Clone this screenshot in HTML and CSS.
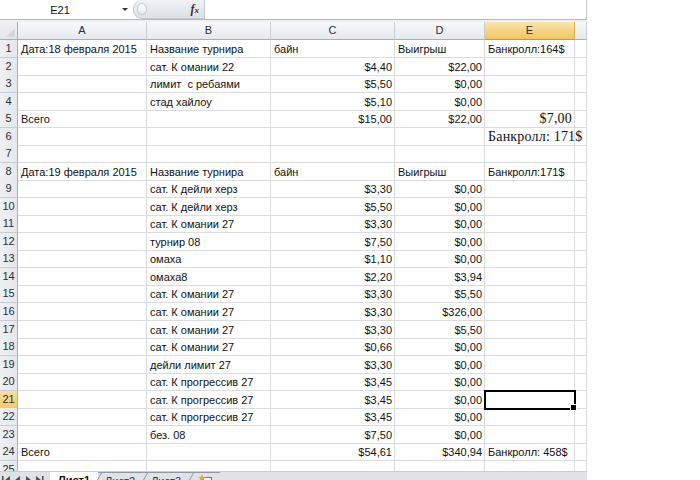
FILE: index.html
```html
<!DOCTYPE html>
<html lang="ru">
<head>
<meta charset="utf-8">
<title>Лист1</title>
<link rel="stylesheet" href="styles.css">
</head>
<body>
<div class="app">
  <div class="fbar">
    <div class="namebox"><span class="ref">E21</span><span class="dd"></span></div>
    <div class="pill"><span class="grip"></span><span class="fx">f<small>x</small></span></div>
    <div class="finput"></div>
  </div>
  <div class="gap"></div>
  <div class="sheet">
    <div class="row hdr"><div class="corner"><span class="tri"></span></div><div class="ch">A</div><div class="ch">B</div><div class="ch">C</div><div class="ch">D</div><div class="ch sel">E</div><div class="ch"></div></div>
    <div class="row"><div class="rh">1</div><div class="c">Дата:18 февраля 2015</div><div class="c">Название турнира</div><div class="c">байн</div><div class="c">Выигрыш</div><div class="c">Банкролл:164$</div><div class="c"></div></div>
    <div class="row"><div class="rh">2</div><div class="c"></div><div class="c">сат. К омании 22</div><div class="c n">$4,40</div><div class="c n">$22,00</div><div class="c"></div><div class="c"></div></div>
    <div class="row"><div class="rh">3</div><div class="c"></div><div class="c">лимит&nbsp; с ребаями</div><div class="c n">$5,50</div><div class="c n">$0,00</div><div class="c"></div><div class="c"></div></div>
    <div class="row"><div class="rh">4</div><div class="c"></div><div class="c">стад хайлоу</div><div class="c n">$5,10</div><div class="c n">$0,00</div><div class="c"></div><div class="c"></div></div>
    <div class="row"><div class="rh">5</div><div class="c">Всего</div><div class="c"></div><div class="c n">$15,00</div><div class="c n">$22,00</div><div class="c n serif">$7,00</div><div class="c"></div></div>
    <div class="row"><div class="rh">6</div><div class="c"></div><div class="c"></div><div class="c"></div><div class="c"></div><div class="c serif ov">Банкролл: 171$</div><div class="c"></div></div>
    <div class="row"><div class="rh">7</div><div class="c"></div><div class="c"></div><div class="c"></div><div class="c"></div><div class="c"></div><div class="c"></div></div>
    <div class="row"><div class="rh">8</div><div class="c">Дата:19 февраля 2015</div><div class="c">Название турнира</div><div class="c">байн</div><div class="c">Выигрыш</div><div class="c">Банкролл:171$</div><div class="c"></div></div>
    <div class="row"><div class="rh">9</div><div class="c"></div><div class="c">сат. К дейли херз</div><div class="c n">$3,30</div><div class="c n">$0,00</div><div class="c"></div><div class="c"></div></div>
    <div class="row"><div class="rh">10</div><div class="c"></div><div class="c">сат. К дейли херз</div><div class="c n">$5,50</div><div class="c n">$0,00</div><div class="c"></div><div class="c"></div></div>
    <div class="row"><div class="rh">11</div><div class="c"></div><div class="c">сат. К омании 27</div><div class="c n">$3,30</div><div class="c n">$0,00</div><div class="c"></div><div class="c"></div></div>
    <div class="row"><div class="rh">12</div><div class="c"></div><div class="c">турнир 08</div><div class="c n">$7,50</div><div class="c n">$0,00</div><div class="c"></div><div class="c"></div></div>
    <div class="row"><div class="rh">13</div><div class="c"></div><div class="c">омаха</div><div class="c n">$1,10</div><div class="c n">$0,00</div><div class="c"></div><div class="c"></div></div>
    <div class="row"><div class="rh">14</div><div class="c"></div><div class="c">омаха8</div><div class="c n">$2,20</div><div class="c n">$3,94</div><div class="c"></div><div class="c"></div></div>
    <div class="row"><div class="rh">15</div><div class="c"></div><div class="c">сат. К омании 27</div><div class="c n">$3,30</div><div class="c n">$5,50</div><div class="c"></div><div class="c"></div></div>
    <div class="row"><div class="rh">16</div><div class="c"></div><div class="c">сат. К омании 27</div><div class="c n">$3,30</div><div class="c n">$326,00</div><div class="c"></div><div class="c"></div></div>
    <div class="row"><div class="rh">17</div><div class="c"></div><div class="c">сат. К омании 27</div><div class="c n">$3,30</div><div class="c n">$5,50</div><div class="c"></div><div class="c"></div></div>
    <div class="row"><div class="rh">18</div><div class="c"></div><div class="c">сат. К омании 27</div><div class="c n">$0,66</div><div class="c n">$0,00</div><div class="c"></div><div class="c"></div></div>
    <div class="row"><div class="rh">19</div><div class="c"></div><div class="c">дейли лимит 27</div><div class="c n">$3,30</div><div class="c n">$0,00</div><div class="c"></div><div class="c"></div></div>
    <div class="row"><div class="rh">20</div><div class="c"></div><div class="c">сат. К прогрессив 27</div><div class="c n">$3,45</div><div class="c n">$0,00</div><div class="c"></div><div class="c"></div></div>
    <div class="row"><div class="rh sel">21</div><div class="c"></div><div class="c">сат. К прогрессив 27</div><div class="c n">$3,45</div><div class="c n">$0,00</div><div class="c active"></div><div class="c"></div></div>
    <div class="row"><div class="rh">22</div><div class="c"></div><div class="c">сат. К прогрессив 27</div><div class="c n">$3,45</div><div class="c n">$0,00</div><div class="c"></div><div class="c"></div></div>
    <div class="row"><div class="rh">23</div><div class="c"></div><div class="c">без. 08</div><div class="c n">$7,50</div><div class="c n">$0,00</div><div class="c"></div><div class="c"></div></div>
    <div class="row"><div class="rh">24</div><div class="c">Всего</div><div class="c"></div><div class="c n">$54,61</div><div class="c n">$340,94</div><div class="c">Банкролл: 458$</div><div class="c"></div></div>
    <div class="row"><div class="rh">25</div><div class="c"></div><div class="c"></div><div class="c"></div><div class="c"></div><div class="c"></div><div class="c"></div></div>
  </div>
  <div class="tabs">
    <div class="nav">
      <svg width="46" height="14" viewBox="0 0 46 14">
        <rect x="2" y="4" width="1.5" height="9" fill="#4a4f57"/>
        <polygon points="10,4 10,13 4.5,8.5" fill="#4a4f57"/>
        <polygon points="20,4 20,13 14.5,8.5" fill="#4a4f57"/>
        <polygon points="26,4 26,13 31.5,8.5" fill="#4a4f57"/>
        <polygon points="36,4 36,13 41.5,8.5" fill="#4a4f57"/>
        <rect x="42" y="4" width="1.5" height="9" fill="#4a4f57"/>
      </svg>
    </div>
    <div class="tab active">Лист1</div>
    <div class="tab">Лист2</div>
    <div class="tab">Лист3</div>
    <div class="tab ins">
      <svg width="16" height="14" viewBox="0 0 16 14">
        <rect x="4.5" y="3.5" width="9" height="10" fill="#fff" stroke="#6b7480"/>
        <polygon points="4,0.5 5.2,3 8,3.2 5.8,4.8 6.5,7.5 4,6 1.5,7.5 2.2,4.8 0,3.2 2.8,3" fill="#f0a31c"/>
      </svg>
    </div>
  </div>
</div>
</body>
</html>
```

FILE: styles.css
```css
* {
  box-sizing: border-box;
}

html, body {
  margin: 0;
  padding: 0;
}

body {
  width: 700px;
  height: 480px;
  overflow: hidden;
  background: #ffffff;
  font-family: "Liberation Sans", Arial, sans-serif;
  font-size: 11px;
  color: #111;
}

.app {
  width: 587px;
}

/* formula bar */
.fbar {
  display: flex;
  height: 20px;
  border-bottom: 1px solid #b3b9c1;
}

.namebox {
  width: 133px;
  display: flex;
  align-items: center;
  position: relative;
}

.namebox .ref {
  width: 120px;
  text-align: center;
  color: #111;
  padding-top: 1px;
}

.namebox .dd {
  width: 0;
  height: 0;
  border-left: 3px solid transparent;
  border-right: 3px solid transparent;
  border-top: 3px solid #333;
  margin-left: 2px;
}

.pill {
  width: 72px;
  height: 19px;
  display: flex;
  align-items: center;
  justify-content: space-between;
  padding: 0 5px 0 3px;
  background: linear-gradient(#f1f3f5, #dde1e6);
  border: 1px solid #c2c7ce;
  border-top: none;
  border-radius: 9px 0 0 9px;
}

.grip {
  width: 10px;
  height: 12px;
  border-radius: 50%;
  border: 1px solid #c4c9cf;
  background: linear-gradient(#ffffff, #e8ebee);
}

.fx {
  font-family: "Liberation Serif", "Times New Roman", serif;
  font-style: italic;
  font-weight: bold;
  font-size: 12px;
  color: #333;
}

.fx small {
  font-size: 9px;
}

.finput {
  flex: 1;
  border-right: 1px solid #c2c7ce;
  background: #fff;
}

.gap {
  height: 2px;
  background: #eef0f3;
}

/* sheet */
.sheet {
  height: 449px;
  overflow: hidden;
}

.row {
  display: grid;
  grid-template-columns: 18px 129px 124px 124px 90px 90px 12px;
  height: 17.54px;
}

.row.hdr {
  height: 18px;
}

.corner {
  background: linear-gradient(#eef0f3, #e2e6eb);
  border-right: 1px solid #a9b0ba;
  border-bottom: 1px solid #a9b0ba;
  position: relative;
}

.corner .tri {
  position: absolute;
  right: 2px;
  bottom: 2px;
  width: 0;
  height: 0;
  border-left: 9px solid transparent;
  border-bottom: 9px solid #d3d8de;
}

.ch {
  background: linear-gradient(#f7f8fa, #e5e9ee);
  border-right: 1px solid #c8cdd4;
  border-bottom: 1px solid #a9b0ba;
  text-align: center;
  line-height: 17px;
  color: #2b2f36;
}

.ch.sel {
  background: linear-gradient(#fbe5ad, #f2c55f);
  border-right-color: #d9b05a;
  border-bottom-color: #c9963a;
}

.rh {
  background: linear-gradient(90deg, #eef0f3, #e4e8ec);
  border-right: 1px solid #a9b0ba;
  border-bottom: 1px solid #c8cdd4;
  text-align: center;
  line-height: 17px;
  color: #2b2f36;
  font-size: 11px;
}

.rh.sel {
  background: linear-gradient(#fbe0a0, #f4c965);
  border-bottom-color: #d9ae5a;
}

.c {
  border-right: 1px solid #dadcdf;
  border-bottom: 1px solid #dadcdf;
  padding: 1px 2px 0 3px;
  line-height: 16px;
  white-space: nowrap;
  overflow: hidden;
}

.c.n {
  text-align: right;
  padding-right: 2px;
}

.c.serif {
  font-family: "Liberation Serif", "Times New Roman", serif;
  font-size: 14px;
  letter-spacing: 0.2px;
  line-height: 16px;
}

.c.ov {
  overflow: visible;
  position: relative;
  z-index: 1;
}

.c.active {
  position: relative;
  overflow: visible;
  outline: 2px solid #000;
  outline-offset: -1px;
  z-index: 2;
}

.c.active::after {
  content: "";
  position: absolute;
  right: -3px;
  bottom: -3px;
  width: 5px;
  height: 5px;
  background: #000;
  border: 1px solid #fff;
}

/* sheet tabs */
.tabs {
  display: flex;
  align-items: flex-start;
  height: 20px;
  background: #dfe3e8;
  border-top: 1px solid #c8cdd4;
}

.nav {
  width: 50px;
  height: 14px;
}

.nav svg {
  display: block;
}

.tab {
  position: relative;
  padding: 2px 9px 0 7px;
  border-top: 1px solid #8e98a5;
  color: #333;
  line-height: 12px;
}

.tab::before {
  content: "";
  position: absolute;
  left: 3px;
  top: 0;
  width: 1px;
  height: 16px;
  background: #8e98a5;
  transform-origin: top left;
  transform: skewX(-30deg);
}

.tab.active {
  background: #fff;
  border-top: none;
  font-weight: bold;
  color: #111;
  padding: 2px 8px 0 8px;
}

.tab.active::before {
  display: none;
}

.tab.ins {
  padding: 1px 6px 0 8px;
}

.tab.ins svg {
  display: block;
}
```
